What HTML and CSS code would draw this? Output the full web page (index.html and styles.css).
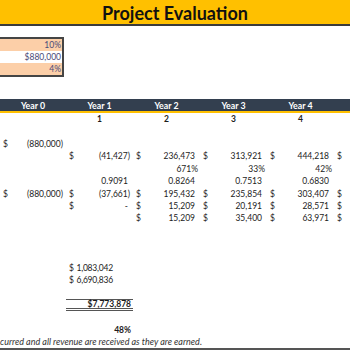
FILE: index.html
```html
<!DOCTYPE html>
<html>
<head>
<meta charset="utf-8">
<link rel="stylesheet" href="styles.css">
</head>
<body>
<div class="title">Project Evaluation</div>
<div class="inputs">
  <div class="in peach">10%</div>
  <div class="in">$880,000</div>
  <div class="in peach">4%</div>
</div>
<div class="sheet">
  <div class="hdr">
    <div class="hc">Year 0</div><div class="hc">Year 1</div><div class="hc">Year 2</div><div class="hc">Year 3</div><div class="hc">Year 4</div><div class="hc"></div>
  </div>
  <div class="row bold">
    <div></div><div class="cell ctr">1</div><div class="cell ctr">2</div><div class="cell ctr">3</div><div class="cell ctr">4</div><div></div>
  </div>
  <div class="row"></div>
  <div class="row">
    <div class="cell neg"><span>$</span><span>(880,000)</span></div>
  </div>
  <div class="row">
    <div></div>
    <div class="cell neg"><span>$</span><span>(41,427)</span></div>
    <div class="cell"><span>$</span><span>236,473</span></div>
    <div class="cell"><span>$</span><span>313,921</span></div>
    <div class="cell"><span>$</span><span>444,218</span></div>
    <div class="cell"><span>$</span></div>
  </div>
  <div class="row">
    <div></div><div></div>
    <div class="cell pct"><span></span><span>671%</span></div>
    <div class="cell pct"><span></span><span>33%</span></div>
    <div class="cell pct"><span></span><span>42%</span></div>
  </div>
  <div class="row">
    <div></div>
    <div class="cell"><span></span><span>0.9091</span></div>
    <div class="cell"><span></span><span>0.8264</span></div>
    <div class="cell"><span></span><span>0.7513</span></div>
    <div class="cell"><span></span><span>0.6830</span></div>
  </div>
  <div class="row">
    <div class="cell neg"><span>$</span><span>(880,000)</span></div>
    <div class="cell neg"><span>$</span><span>(37,661)</span></div>
    <div class="cell"><span>$</span><span>195,432</span></div>
    <div class="cell"><span>$</span><span>235,854</span></div>
    <div class="cell"><span>$</span><span>303,407</span></div>
    <div class="cell"><span>$</span></div>
  </div>
  <div class="row">
    <div></div>
    <div class="cell"><span>$</span><span>-</span></div>
    <div class="cell"><span>$</span><span>15,209</span></div>
    <div class="cell"><span>$</span><span>20,191</span></div>
    <div class="cell"><span>$</span><span>28,571</span></div>
    <div class="cell"><span>$</span></div>
  </div>
  <div class="row">
    <div></div><div></div>
    <div class="cell"><span>$</span><span>15,209</span></div>
    <div class="cell"><span>$</span><span>35,400</span></div>
    <div class="cell"><span>$</span><span>63,971</span></div>
    <div class="cell"><span>$</span></div>
  </div>
  <div class="row"></div>
  <div class="row"></div>
  <div class="row"></div>
  <div class="row">
    <div></div>
    <div class="cell sum"><span>$</span><span>1,083,042</span></div>
  </div>
  <div class="row">
    <div></div>
    <div class="cell sum"><span>$</span><span>6,690,836</span></div>
  </div>
  <div class="row"></div>
  <div class="row">
    <div></div>
    <div class="cell total"><span></span><span>$7,773,878</span></div>
  </div>
  <div class="row"></div>
  <div class="row bold">
    <div></div>
    <div class="cell pct"><span></span><span>48%</span></div>
  </div>
  <div class="note">
    <div class="note-text">All costs are incurred and all revenue are received as they are earned.</div>
  </div>
</div>
</body>
</html>
```

FILE: styles.css
```css
html, body {
  margin: 0;
  padding: 0;
  background: #ffffff;
}
body {
  width: 350px;
  height: 350px;
  overflow: hidden;
  font-family: Lato, "Open Sans", sans-serif;
  color: #1c1c1c;
}
.title {
  display: flex;
  align-items: center;
  justify-content: center;
  padding-top: 2px;
  box-sizing: border-box;
  height: 26px;
  background: #FFC000;
  border-bottom: 2px solid #3b3b3b;
  font-weight: 700;
  font-size: 18px;
  color: #111111;
}
.inputs {
  margin-top: 11px;
  width: 62px;
  border: 2px solid #454545;
  border-left: none;
}
.in {
  height: 12px;
  line-height: 12px;
  text-align: right;
  padding-right: 1px;
  font-size: 8.5px;
  color: #4a4a78;
  background: #ffffff;
}
.in.peach {
  background: #FCCFA8;
}
.sheet {
  margin-top: 22px;
}
.hdr {
  display: grid;
  grid-template-columns: 66px 67px 67px 67px 67px 1fr;
  height: 12px;
  background: #333F4F;
  border-bottom: 2px solid #FFC000;
  align-items: center;
  color: #ffffff;
  font-weight: 700;
  font-size: 8.8px;
}
.hc {
  text-align: center;
}
.row {
  display: grid;
  grid-template-columns: 66px 67px 67px 67px 67px 1fr;
  height: 12.4px;
  align-items: center;
  font-size: 8.5px;
  line-height: 12px;
}
.bold {
  font-weight: 700;
}
.cell {
  display: flex;
  justify-content: space-between;
  padding: 0 5px 0 3px;
  white-space: nowrap;
}
.cell.ctr {
  justify-content: center;
  padding: 0;
}
.cell.neg {
  padding-right: 3px;
}
.cell.pct {
  padding-right: 2px;
}
.cell.sum {
  padding-right: 20px;
  letter-spacing: -0.2px;
}
.cell.total {
  font-weight: 700;
  padding-right: 2px;
  border-top: 1px solid #555555;
  border-bottom: 3px double #555555;
  height: 12.4px;
  align-items: center;
  box-sizing: border-box;
}
.note {
  height: 12.4px;
  border-bottom: 3px solid #555555;
  overflow: hidden;
}
.note-text {
  width: 202px;
  display: flex;
  justify-content: flex-end;
  white-space: nowrap;
  overflow: hidden;
  font-style: italic;
  font-size: 9px;
  line-height: 12px;
  color: #333333;
}
```
